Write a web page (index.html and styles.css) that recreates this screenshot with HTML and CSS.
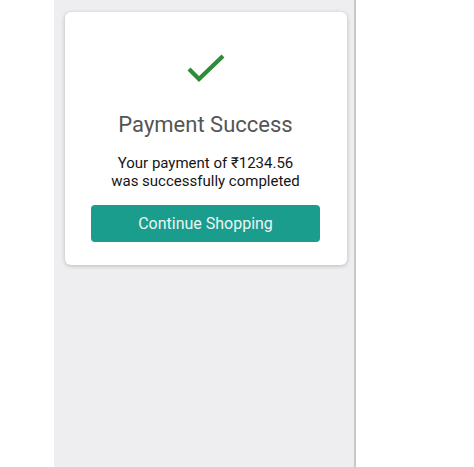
FILE: index.html
```html
<!DOCTYPE html>
<html lang="en">
<head>
    <meta charset="UTF-8">
    <meta name="viewport" content="width=device-width, initial-scale=1.0">
    <title>Payment Success</title>
    <link rel="stylesheet" href="styles.css">
</head>
<body>
    <div class="phone">
        <div class="card">
            <svg class="check" width="40" height="30" viewBox="0 0 40 30">
                <path d="M3 16 L13 26 L37 3" fill="none" stroke="#2e8b3a" stroke-width="4.2"/>
            </svg>
            <h1 class="title">Payment Success</h1>
            <p class="msg">Your payment of ₹1234.56<br>was successfully completed</p>
            <a href="javascript:;" class="btn">Continue Shopping</a>
        </div>
    </div>
</body>
</html>
```

FILE: styles.css
```css
*{
    padding: 0;
    margin: 0;
    box-sizing: border-box;
}
body{
    background-color: #fff;
    font-family: Roboto, "Noto Sans", "DejaVu Sans", sans-serif;
}
a{
    text-decoration: none;
}
.phone{
    width: 302px;
    height: 467px;
    margin-left: 54px;
    background-color: #eeedef;
    border-right: 2px solid #c9c9c9;
    padding-top: 12px;
}
.card{
    width: 282px;
    margin-left: 11px;
    background-color: #fff;
    border-radius: 6px;
    box-shadow: 0 1px 4px rgba(0, 0, 0, 0.22);
    padding: 41px 27px 23px 26px;
    display: flex;
    flex-direction: column;
    align-items: center;
    text-align: center;
}
.check{
    display: block;
}
.title{
    margin-top: 29px;
    font-size: 22px;
    line-height: 26px;
    font-weight: 400;
    color: #555;
}
.msg{
    margin-top: 16px;
    font-size: 15px;
    line-height: 18px;
    color: #151515;
}
.btn{
    margin-top: 15px;
    width: 100%;
    height: 37px;
    line-height: 37px;
    border-radius: 4px;
    background-color: #1b9d8d;
    color: #eaf6f3;
    font-size: 16px;
}
```
